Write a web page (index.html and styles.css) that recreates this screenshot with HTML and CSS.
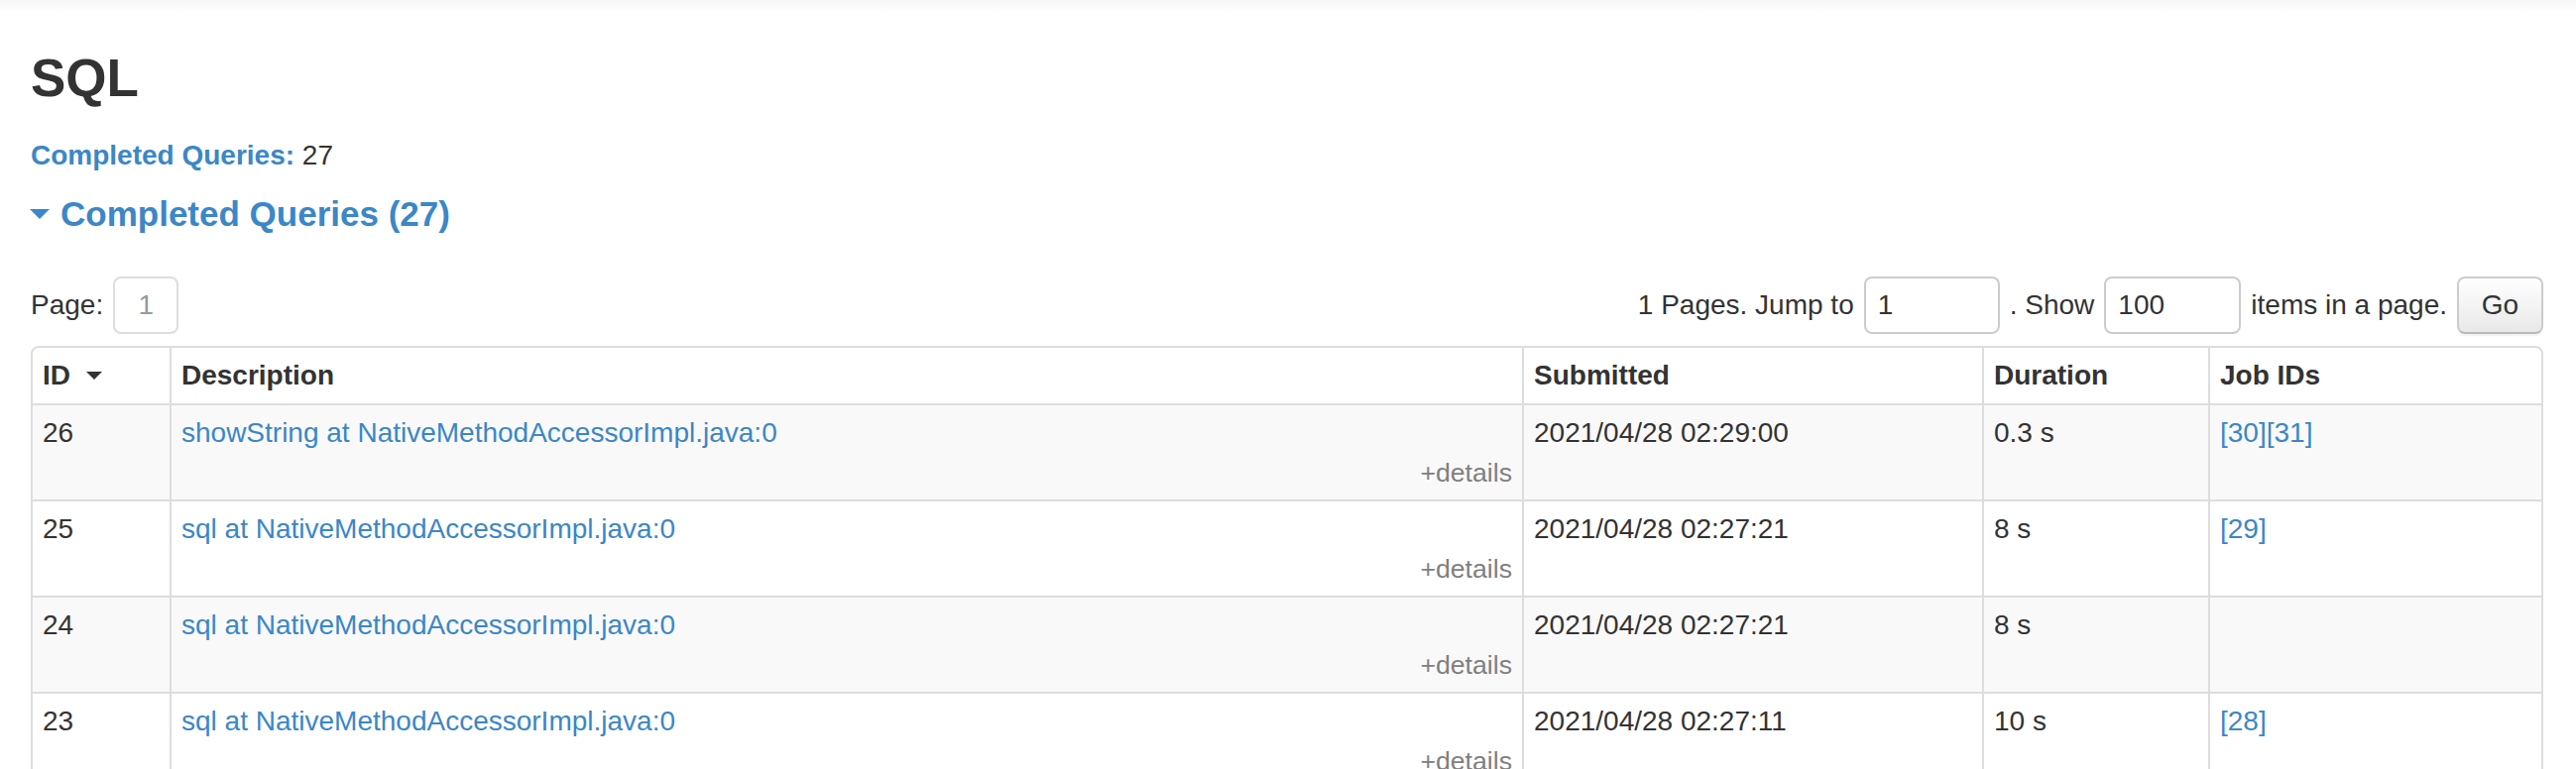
FILE: index.html
```html
<!DOCTYPE html>
<html>
<head>
<meta charset="utf-8">
<title>SQL</title>
<link rel="stylesheet" href="styles.css">
</head>
<body>
<div class="topband"></div>
<div class="container">
  <h3 class="page-title">SQL</h3>
  <div class="summary"><a class="summary-link" href="#">Completed Queries:</a> 27</div>
  <h4 class="section-title"><span class="arrow-open"></span><a href="#">Completed Queries (27)</a></h4>

  <div class="pager">
    <div class="pager-left">
      <span>Page:</span>
      <span class="page-box">1</span>
    </div>
    <div class="pager-right">
      <span>1 Pages. Jump to</span>
      <input class="pager-input jump" type="text" value="1">
      <span>. Show</span>
      <input class="pager-input show" type="text" value="100">
      <span>items in a page.</span>
      <button class="btn-go" type="button">Go</button>
    </div>
  </div>

  <table class="sql-table">
    <colgroup>
      <col class="col-id">
      <col class="col-desc">
      <col class="col-sub">
      <col class="col-dur">
      <col class="col-jobs">
    </colgroup>
    <thead>
      <tr>
        <th>ID<span class="sort-arrow"></span></th>
        <th>Description</th>
        <th>Submitted</th>
        <th>Duration</th>
        <th>Job IDs</th>
      </tr>
    </thead>
    <tbody>
      <tr class="odd">
        <td>26</td>
        <td><a href="#">showString at NativeMethodAccessorImpl.java:0</a><div class="details">+details</div></td>
        <td>2021/04/28 02:29:00</td>
        <td>0.3 s</td>
        <td><a href="#">[30]</a><a href="#">[31]</a></td>
      </tr>
      <tr>
        <td>25</td>
        <td><a href="#">sql at NativeMethodAccessorImpl.java:0</a><div class="details">+details</div></td>
        <td>2021/04/28 02:27:21</td>
        <td>8 s</td>
        <td><a href="#">[29]</a></td>
      </tr>
      <tr class="odd">
        <td>24</td>
        <td><a href="#">sql at NativeMethodAccessorImpl.java:0</a><div class="details">+details</div></td>
        <td>2021/04/28 02:27:21</td>
        <td>8 s</td>
        <td></td>
      </tr>
      <tr>
        <td>23</td>
        <td><a href="#">sql at NativeMethodAccessorImpl.java:0</a><div class="details">+details</div></td>
        <td>2021/04/28 02:27:11</td>
        <td>10 s</td>
        <td><a href="#">[28]</a></td>
      </tr>
    </tbody>
  </table>
</div>
</body>
</html>
```

FILE: styles.css
```css
html, body {
  margin: 0;
  padding: 0;
  background: #ffffff;
}

body {
  font-family: "Liberation Sans", Arial, Helvetica, sans-serif;
  font-size: 28px;
  line-height: 42px;
  color: #333333;
}

a {
  color: #3b87c7;
  text-decoration: none;
}

.topband {
  height: 12px;
  background: linear-gradient(#f6f6f6, #ffffff);
}

.container {
  padding: 0 33px 40px 31px;
}

.page-title {
  margin: 35px 0 0 0;
  font-size: 53px;
  line-height: 64px;
  font-weight: bold;
  color: #333333;
}

.summary {
  margin-top: 25px;
}

.summary-link {
  font-weight: bold;
}

.section-title {
  margin: 18px 0 0 0;
  font-size: 35px;
  line-height: 40px;
  font-weight: bold;
  display: flex;
  align-items: center;
}

.arrow-open {
  width: 0;
  height: 0;
  border-left: 10px solid transparent;
  border-right: 10px solid transparent;
  border-top: 10px solid #3b87c7;
  margin: 0 11px 0 -1px;
}

.pager {
  display: flex;
  justify-content: space-between;
  align-items: center;
  margin-top: 43px;
  height: 58px;
}

.pager-left,
.pager-right {
  display: flex;
  align-items: center;
  gap: 10px;
}

.page-box {
  box-sizing: border-box;
  width: 66px;
  height: 58px;
  border: 2px solid #dddddd;
  border-radius: 8px;
  color: #999999;
  text-align: center;
  line-height: 54px;
}

.pager-input {
  box-sizing: border-box;
  height: 58px;
  border: 2px solid #cccccc;
  border-radius: 8px;
  padding: 0 12px;
  font-family: inherit;
  font-size: 28px;
  color: #333333;
  background: #ffffff;
  outline: none;
}

.pager-input.jump {
  width: 137px;
}

.pager-input.show {
  width: 138px;
}

.btn-go {
  box-sizing: border-box;
  width: 87px;
  height: 58px;
  border: 2px solid #cccccc;
  border-bottom-color: #b8b8b8;
  border-radius: 8px;
  background: linear-gradient(#ffffff, #e8e8e8);
  box-shadow: 0 2px 2px rgba(0, 0, 0, 0.06);
  font-family: inherit;
  font-size: 28px;
  color: #333333;
  padding: 0;
}

.sql-table {
  margin-top: 12px;
  width: 100%;
  table-layout: fixed;
  border-collapse: separate;
  border-spacing: 0;
  border: 2px solid #dddddd;
  border-radius: 8px;
}

.col-id { width: 138px; }
.col-desc { width: 1364px; }
.col-sub { width: 464px; }
.col-dur { width: 228px; }
.col-jobs { width: 336px; }

.sql-table th,
.sql-table td {
  box-sizing: border-box;
  padding: 7px 10px;
  text-align: left;
  vertical-align: top;
  border-left: 2px solid #dddddd;
}

.sql-table th:first-child,
.sql-table td:first-child {
  border-left: none;
}

.sql-table th {
  font-weight: bold;
  color: #333333;
}

.sql-table td {
  border-top: 2px solid #dddddd;
}

.sql-table tr.odd td {
  background: #f9f9f9;
}

.sort-arrow {
  display: inline-block;
  width: 0;
  height: 0;
  border-left: 8px solid transparent;
  border-right: 8px solid transparent;
  border-top: 8px solid #333333;
  margin-left: 16px;
  vertical-align: middle;
  position: relative;
  top: -2px;
}

.details {
  text-align: right;
  font-size: 26.67px;
  line-height: 39px;
  color: #808080;
}
```
